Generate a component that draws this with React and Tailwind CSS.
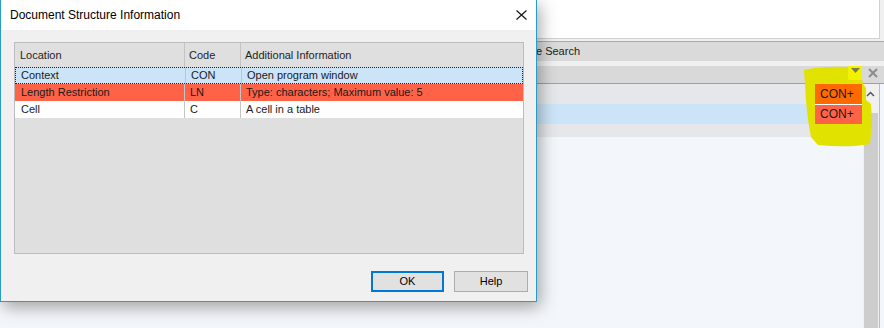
export default function App() {
	const rows = [
		{ loc: 'Context', code: 'CON', info: 'Open program window', bg: 'bg-[#cce4f7]', focus: true },
		{ loc: 'Length Restriction', code: 'LN', info: 'Type: characters; Maximum value: 5', bg: 'bg-[#ff6347]' },
		{ loc: 'Cell', code: 'C', info: 'A cell in a table', bg: 'bg-white' },
	];

	return (
		<div className="relative w-[884px] h-[328px] overflow-hidden bg-[#f3f6fa] text-[#1a1a1a] font-['Liberation_Sans',Arial,sans-serif]">
			{/* background application */}
			<div className="flex flex-col h-full">
				<div className="h-[41px] bg-[#f0f0f0]">
					<div className="w-[880px] h-[39px] bg-white border-r border-b border-[#d2d2d2]" />
				</div>

				<div className="h-[20px] bg-[#dadada] border-t border-[#a9a9a9] flex items-center">
					<div className="w-[580px] text-right text-[11px] leading-none text-[#222]">Concordance Search</div>
				</div>

				<div className="h-[5px] bg-[#f0f0f0]" />

				<div className="h-[18px] bg-[#d9d9d9] border-b border-[#a0a0a0] flex justify-end items-start pr-[6px] gap-[6px]">
					<div className="w-[14px] h-[14px] bg-[#f2f200] flex justify-center pt-[2px]">
						<svg width="9" height="5" viewBox="0 0 9 5">
							<path d="M0 0 H9 L4.5 5 Z" fill="#7a7a52" />
						</svg>
					</div>
					<svg width="10" height="10" viewBox="0 0 10 10" className="mt-[2px]">
						<path d="M1 1 L9 9 M9 1 L1 9" stroke="#8c8c8c" strokeWidth="2" />
					</svg>
				</div>

				<div className="flex flex-1">
					<div className="flex-1 flex flex-col">
						<div className="h-[20px] flex bg-[#e6e7ea]">
							<div className="flex-1" />
							<div className="w-[49px] border-l border-[#c8c8c8] bg-[#ff6a00] pl-[5px] text-[12px] leading-[20px]">CON+</div>
						</div>
						<div className="h-[20px] flex bg-[#cce4f7]">
							<div className="flex-1" />
							<div className="w-[49px] border-l border-t border-l-[#c8c8c8] border-t-white bg-[#ff6347] pl-[5px] text-[12px] leading-[18px]">CON+</div>
						</div>
						<div className="h-[13px] flex bg-[#e6e7ea]">
							<div className="flex-1" />
							<div className="w-[49px] border-l border-[#c8c8c8]" />
						</div>
						<div className="flex-1" />
					</div>

					<div className="w-[17px] bg-[#f0f0f0] border-r border-[#bdbdbd] flex flex-col">
						<div className="h-[17px]" />
						<div className="flex-1 mt-[12px] mx-[1px] bg-[#cdcdcd]" />
					</div>
					<div className="w-[4px]" />
				</div>
			</div>

			{/* dialog window */}
			<div className="absolute left-0 top-0 w-[537px] h-[302px] flex flex-col bg-[#f0f0f0] border-x border-b border-[#2a9cc3] shadow-[3px_5px_16px_rgba(0,0,0,0.35)]">
				<div className="h-[30px] bg-white flex items-center justify-between pl-[9px] pr-[9px]">
					<span className="text-[12px] text-black">Document Structure Information</span>
					<svg width="11" height="10" viewBox="0 0 11 10">
						<path d="M0.5 0.5 L10.5 9.5 M10.5 0.5 L0.5 9.5" stroke="#111" strokeWidth="1.1" />
					</svg>
				</div>

				<div className="flex flex-col pl-[13px] pt-[12px]">
					<div className="w-[510px] h-[212px] border border-[#bcbcbc] bg-[#dfdfdf] text-[11px]">
						<div className="h-[24px] flex items-center text-[#1e1e1e]">
							<div className="w-[169px] pl-[5px]">Location</div>
							<div className="w-[56px] h-full border-l border-[#c4c4c4] pl-[4px] flex items-center">Code</div>
							<div className="flex-1 h-full border-l border-[#c4c4c4] pl-[4px] flex items-center">Additional Information</div>
						</div>
						{rows.map((r) => (
							<div
								key={r.loc}
								className={`h-[17px] flex ${r.bg} ${r.focus ? 'border border-dotted border-[#222]' : ''}`}
							>
								<div className={`w-[169px] flex items-center ${r.focus ? 'pl-[5px] w-[168px]' : 'pl-[6px]'}`}>{r.loc}</div>
								<div className="w-[56px] border-l border-[#c4c4c4] pl-[5px] flex items-center">{r.code}</div>
								<div className="flex-1 border-l border-[#c4c4c4] pl-[5px] flex items-center">{r.info}</div>
							</div>
						))}
					</div>

					<div className="flex justify-end gap-[10px] mt-[17px] pr-[8px]">
						<button className="w-[73px] h-[21px] bg-[#e1e1e1] border-2 border-[#0078d7] text-[11px] text-black">OK</button>
						<button className="w-[74px] h-[21px] bg-[#e1e1e1] border border-[#adadad] text-[11px] text-black">Help</button>
					</div>
				</div>
			</div>

			{/* highlighter annotation */}
			<svg className="absolute left-0 top-0 pointer-events-none" width="884" height="328">
				<path
					fillRule="evenodd"
					fill="#e2e200"
					d="M804 70 Q 822 66 848 67 L 848 80 L 862 80 L 863 84 L 866 88 L 866 100 L 871 104 L 872 122 L 870 144 Q 848 148 818 145 L 811 137 Q 806 112 805 84 Z M815 84 H862 V124 H815 Z"
				/>
				<path d="M867 96 L870.5 92.5 L874 96" stroke="#555" strokeWidth="1.5" fill="none" />
			</svg>
		</div>
	);
}
